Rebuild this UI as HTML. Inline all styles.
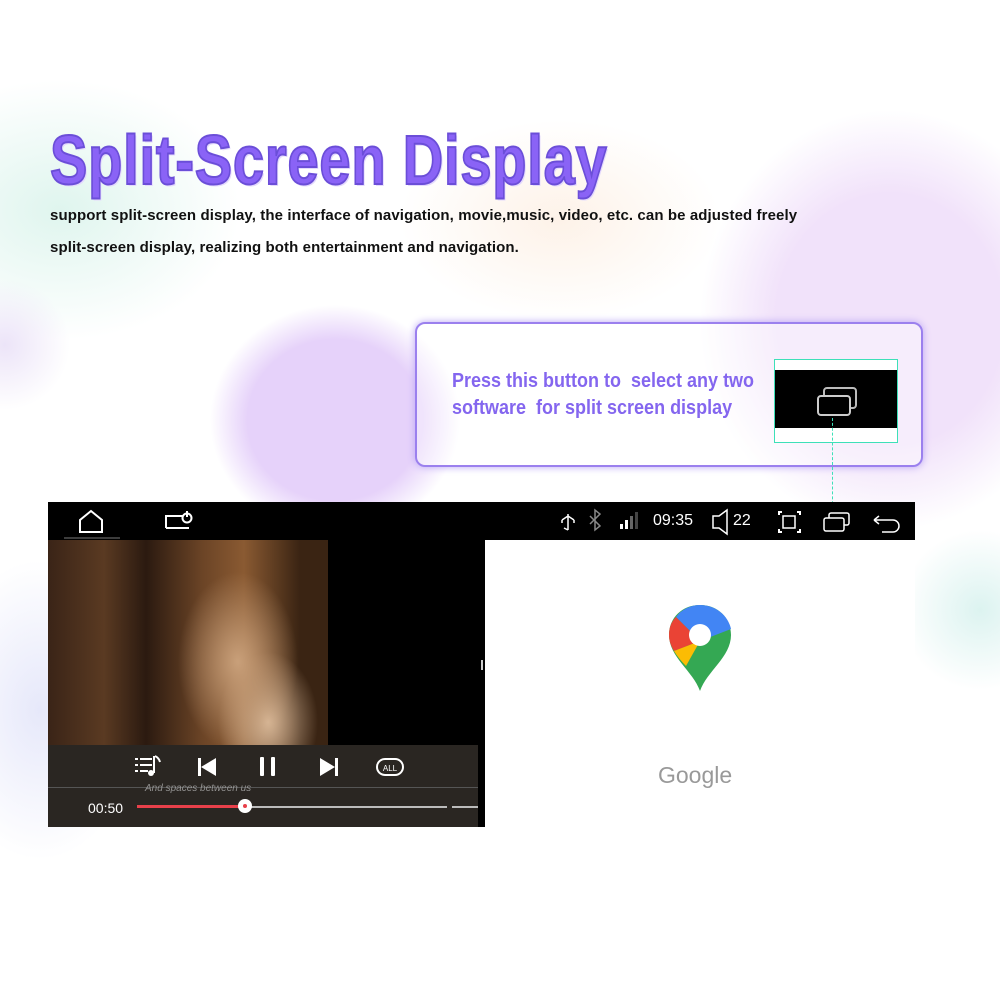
<!DOCTYPE html>
<html><head><style>
body{margin:0;width:1000px;height:1000px;overflow:hidden;background:#fff;position:relative;font-family:"Liberation Sans",sans-serif}
.b{position:absolute;border-radius:50%}
</style></head><body>
<div class="b" style="left:-120px;top:80px;width:360px;height:260px;background:radial-gradient(closest-side,#dff5ee,rgba(255,255,255,0));"></div>
<div class="b" style="left:700px;top:110px;width:380px;height:420px;background:radial-gradient(closest-side,#f1e2fa 60%,rgba(255,255,255,0));"></div>
<div class="b" style="left:210px;top:305px;width:250px;height:230px;background:radial-gradient(closest-side,#e6d2fa 70%,rgba(255,255,255,0.2));"></div>
<div class="b" style="left:-60px;top:280px;width:130px;height:130px;background:radial-gradient(closest-side,#ece4f8,rgba(255,255,255,0));"></div>
<div class="b" style="left:400px;top:120px;width:320px;height:200px;background:radial-gradient(closest-side,#fdf2e8,rgba(255,255,255,0));"></div>
<div class="b" style="left:-60px;top:560px;width:200px;height:300px;background:radial-gradient(closest-side,#e6e8fa,rgba(255,255,255,0));"></div>
<div class="b" style="left:900px;top:530px;width:160px;height:160px;background:radial-gradient(closest-side,#dcf3f0,rgba(255,255,255,0));"></div>

<div style="position:absolute;left:50px;top:120px;font-size:70px;font-weight:bold;color:#8a63f6;letter-spacing:1px;transform:scaleX(0.8);transform-origin:left;white-space:nowrap;-webkit-text-stroke:2px #6b4ed8;text-shadow:2px 2px 0 #e4dafc">Split-Screen Display</div>
<div style="position:absolute;left:50px;top:207px;font-size:15px;font-weight:bold;color:#111;white-space:nowrap;letter-spacing:0.1px">support split-screen display, the interface of navigation, movie,music, video, etc. can be adjusted freely</div>
<div style="position:absolute;left:50px;top:239px;font-size:15px;font-weight:bold;color:#111;white-space:nowrap;letter-spacing:0.1px">split-screen display, realizing both entertainment and navigation.</div>

<div style="position:absolute;left:415px;top:322px;width:504px;height:141px;border:2px solid #9b80ee;border-radius:10px;box-shadow:0 0 8px #b9a4f5;background:rgba(255,255,255,0.4)"></div>
<div style="position:absolute;left:452px;top:368px;font-size:20px;font-weight:bold;color:#8466ef;line-height:27px;white-space:nowrap;transform:scaleX(0.9);transform-origin:left">Press this button to&nbsp; select any two<br>software&nbsp; for split screen display</div>
<div style="position:absolute;left:774px;top:359px;width:122px;height:82px;border:1px solid #3de0b8;background:#fff"></div>
<div style="position:absolute;left:775px;top:370px;width:122px;height:58px;background:#000"></div>
<svg style="position:absolute;left:815px;top:385px" width="46" height="34"><rect x="9" y="3" width="32" height="20" rx="3" fill="none" stroke="#bbb" stroke-width="2"/><rect x="3" y="11" width="32" height="19" rx="3" fill="#000" stroke="#ccc" stroke-width="2"/></svg>
<div style="position:absolute;left:832px;top:418px;width:0;height:96px;border-left:1px dashed #3de0b8"></div>

<div style="position:absolute;left:48px;top:502px;width:867px;height:38px;background:#000"></div>
<div style="position:absolute;left:48px;top:540px;width:280px;height:205px;background:linear-gradient(90deg,#3a2417 0%,#5a3a22 20%,#2b1a10 35%,#6b4426 55%,#8a5a32 70%,#3a2413 90%)"></div>
<div style="position:absolute;left:48px;top:502px;width:280px;height:243px;background:radial-gradient(ellipse 60px 90px at 190px 160px,#c9a07a,rgba(0,0,0,0)),radial-gradient(ellipse 50px 70px at 220px 220px,#d8b898,rgba(0,0,0,0))"></div>
<div style="position:absolute;left:328px;top:540px;width:157px;height:205px;background:#000"></div>
<div style="position:absolute;left:48px;top:745px;width:430px;height:82px;background:#2a2622"></div>
<div style="position:absolute;left:478px;top:745px;width:7px;height:82px;background:#000"></div>
<div style="position:absolute;left:48px;top:787px;width:430px;height:1px;background:#555"></div>
<div style="position:absolute;left:485px;top:540px;width:430px;height:287px;background:#fff"></div>

<svg style="position:absolute;left:48px;top:502px" width="867" height="38" fill="none" stroke="#fff" stroke-width="2">
<path d="M32 30V18L43 9L54 18V30Z"/><path d="M16 36H72" stroke="#777" stroke-width="1"/>
<path d="M118 26V14H135M118 26H141" /><circle cx="139" cy="16" r="4.5"/><path d="M139 9V15"/>
<path d="M520 12V28M520 28l-4-2M514 18l6-4 6 4M514 18v3M526 18v3" stroke-width="1.5"/>
<path d="M542 14l10 10-5 4V8l5 4-10 10" stroke="#888" stroke-width="1.5"/>
<rect x="572" y="22" width="3" height="5" fill="#fff" stroke="none"/><rect x="577" y="18" width="3" height="9" fill="#fff" stroke="none"/><rect x="582" y="14" width="3" height="13" fill="#666" stroke="none"/><rect x="587" y="10" width="3" height="17" fill="#444" stroke="none"/>
<path d="M665 14h6l8-6v24l-8-6h-6z" stroke-width="1.5"/>
<path d="M731 13v-3h3M749 10h3v3M752 27v3h-3M734 30h-3v-3" /><rect x="735" y="14" width="12" height="12" stroke-width="1.5"/>
<rect x="781" y="11" width="20" height="12" rx="2" stroke-width="1.5"/><rect x="776" y="16" width="20" height="13" rx="2" fill="#000" stroke-width="1.5"/>
<path d="M826 18h19a6 6 0 010 12h-11M826 18l5-4M826 18l5 4" stroke-width="1.5"/>
</svg>
<div style="position:absolute;left:653px;top:512px;color:#fff;font-size:16px">09:35</div>
<div style="position:absolute;left:733px;top:512px;color:#fff;font-size:16px">22</div>

<svg style="position:absolute;left:130px;top:752px" width="290" height="30" fill="#fff">
<rect x="5" y="6" width="3" height="2"/><rect x="10" y="6" width="12" height="2"/><rect x="5" y="12" width="3" height="2"/><rect x="10" y="12" width="12" height="2"/><rect x="5" y="18" width="3" height="2"/><rect x="10" y="18" width="8" height="2"/>
<rect x="23" y="4" width="2" height="17"/><circle cx="21" cy="21" r="3"/><path d="M25 4q4 2 5 6" stroke="#fff" fill="none" stroke-width="2"/>
<rect x="68" y="6" width="3" height="18"/><path d="M71 15l15-9v18z"/>
<rect x="130" y="5" width="4" height="19" rx="1"/><rect x="141" y="5" width="4" height="19" rx="1"/>
<path d="M190 6l15 9-15 9z"/><rect x="205" y="6" width="3" height="18"/>
<rect x="247" y="7" width="26" height="16" rx="8" fill="none" stroke="#fff" stroke-width="2"/>
<text x="260" y="19" font-size="8" font-family="Liberation Sans" text-anchor="middle" fill="#fff">ALL</text>
</svg>
<div style="position:absolute;left:145px;top:783px;color:#aaa;font-size:10px;font-style:italic;opacity:.8">And spaces between us</div>
<div style="position:absolute;left:88px;top:800px;color:#fff;font-size:14px">00:50</div>
<div style="position:absolute;left:137px;top:806px;width:310px;height:2px;background:#bbb"></div>
<div style="position:absolute;left:452px;top:806px;width:26px;height:2px;background:#bbb"></div>
<div style="position:absolute;left:137px;top:805px;width:108px;height:3px;background:#e8404a"></div>
<div style="position:absolute;left:238px;top:799px;width:14px;height:14px;border-radius:50%;background:#fff"></div>
<div style="position:absolute;left:243px;top:804px;width:4px;height:4px;border-radius:50%;background:#e8404a"></div>
<div style="position:absolute;left:481px;top:660px;width:2px;height:10px;background:#ccc"></div>

<svg style="position:absolute;left:667px;top:603px" width="66" height="90" viewBox="0 0 66 90">
<path d="M33 2C15 2 2 15 2 32c0 22 24 36 31 56 7-20 31-34 31-56C64 15 51 2 33 2z" fill="#34a853"/>
<path d="M33 2C23 2 14 7 9 14l24 24 31-12C61 12 48 2 33 2z" fill="#4285f4"/>
<path d="M9 14C4 19 2 25 2 32c0 6 2 11 5 16l26-10z" fill="#ea4335"/>
<path d="M7 48c3 5 7 10 12 15l14-25z" fill="#fbbc04"/>
<circle cx="33" cy="32" r="11" fill="#fff"/>
</svg>
<div style="position:absolute;left:658px;top:762px;color:#999;font-size:23px">Google</div>
</body></html>
